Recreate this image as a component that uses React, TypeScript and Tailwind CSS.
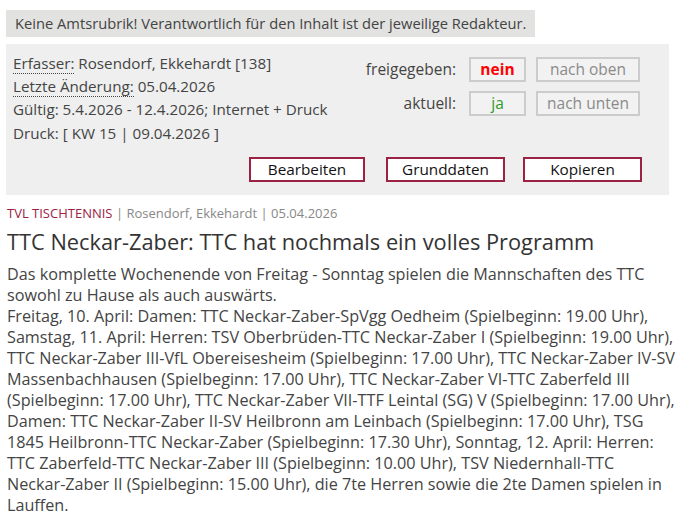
const body =
  "Freitag, 10. April: Damen: TTC Neckar-Zaber-SpVgg Oedheim (Spielbeginn: 19.00 Uhr), Samstag, 11. April: Herren: TSV Oberbrüden-TTC Neckar-Zaber I (Spielbeginn: 19.00 Uhr), TTC Neckar-Zaber III-VfL Obereisesheim (Spielbeginn: 17.00 Uhr), TTC Neckar-Zaber IV-SV Massenbachhausen (Spielbeginn: 17.00 Uhr), TTC Neckar-Zaber VI-TTC Zaberfeld III (Spielbeginn: 17.00 Uhr), TTC Neckar-Zaber VII-TTF Leintal (SG) V (Spielbeginn: 17.00 Uhr), Damen: TTC Neckar-Zaber II-SV Heilbronn am Leinbach (Spielbeginn: 17.00 Uhr), TSG 1845 Heilbronn-TTC Neckar-Zaber (Spielbeginn: 17.30 Uhr), Sonntag, 12. April: Herren: TTC Zaberfeld-TTC Neckar-Zaber III (Spielbeginn: 10.00 Uhr), TSV Niedernhall-TTC ";

function StatusBox({ children, className }: { children: React.ReactNode; className: string }) {
  return (
    <span
      className={`flex items-center justify-center h-[25px] border-2 border-[#cccccc] bg-[#f2f2f2] ${className}`}
    >
      {children}
    </span>
  );
}

function ActionButton({ label, className }: { label: string; className: string }) {
  return (
    <button
      className={`h-[25px] border-2 border-[#9b2242] bg-white text-[15.3px] text-[#111] leading-none ${className}`}
    >
      {label}
    </button>
  );
}

export default function App() {
  return (
    <div
      className="min-h-screen bg-white pl-[6px] pt-[10px] text-[#444]"
      style={{ fontFamily: '"Open Sans", sans-serif' }}
    >
      <div className="inline-block bg-[#e2e2e0] px-[9px] h-[27px] leading-[27px] text-[14.7px] text-[#444]">
        Keine Amtsrubrik! Verantwortlich für den Inhalt ist der jeweilige Redakteur.
      </div>

      {/* Verwaltungsbox */}
      <div className="mt-[7px] w-[663px] h-[151px] bg-[#efefef] pl-[7px] pt-[8px] flex flex-col">
        <div className="flex items-start">
          <div className="text-[15.2px] leading-[23px] text-[#444] w-[340px]">
            <div>
              <abbr className="no-underline border-b border-dotted border-[#444]" title="Erfasser">
                Erfasser:
              </abbr>{" "}
              Rosendorf, Ekkehardt [138]
            </div>
            <div>
              <abbr className="no-underline border-b border-dotted border-[#444]" title="Letzte Änderung">
                Letzte Änderung:
              </abbr>{" "}
              05.04.2026
            </div>
            <div>Gültig: 5.4.2026 - 12.4.2026; Internet + Druck</div>
            <div className="mt-[1px]">Druck: [ KW 15 | 09.04.2026 ]</div>
          </div>

          <div className="ml-auto mr-[29px] mt-[5px] grid grid-cols-[auto_57px_104px] content-start gap-x-[10px] gap-y-[9px] items-center text-[15.5px]">
            <span className="text-right pr-[3px] text-[#444]">freigegeben:</span>
            <StatusBox className="font-bold text-[#ff0000]">nein</StatusBox>
            <StatusBox className="text-[#8a8a8a]">nach oben</StatusBox>
            <span className="text-right pr-[3px] text-[#444]">aktuell:</span>
            <StatusBox className="text-[#2e9a2e]">ja</StatusBox>
            <StatusBox className="text-[#8a8a8a]">nach unten</StatusBox>
          </div>
        </div>

        <div className="mt-auto mb-[13px] mr-[27px] flex justify-end">
          <ActionButton label="Bearbeiten" className="w-[116px]" />
          <ActionButton label="Grunddaten" className="w-[119px] ml-[21px]" />
          <ActionButton label="Kopieren" className="w-[119px] ml-[18px]" />
        </div>
      </div>

      {/* Artikel */}
      <div className="w-[676px] pl-[1px]">
        <div className="mt-[9px] text-[13px] leading-[18px] text-[#888]">
          <span className="text-[#9b2242]">TVL TISCHTENNIS</span> | Rosendorf, Ekkehardt | 05.04.2026
        </div>
        <h1 className="mt-[6px] text-[21.8px] leading-[28px] text-[#333]">
          TTC Neckar-Zaber: TTC hat nochmals ein volles Programm
        </h1>
        <p className="mt-[8px] text-[16.2px] leading-[21px] text-[#444]">
          Das komplette Wochenende von Freitag - Sonntag spielen die Mannschaften des TTC sowohl zu
          Hause als auch auswärts.
          <br />
          {body}
          <span className="whitespace-nowrap">Neckar-Zaber II</span> (Spielbeginn: 15.00 Uhr), die 7te
          Herren sowie die 2te Damen spielen in Lauffen.
        </p>
      </div>
    </div>
  );
}
